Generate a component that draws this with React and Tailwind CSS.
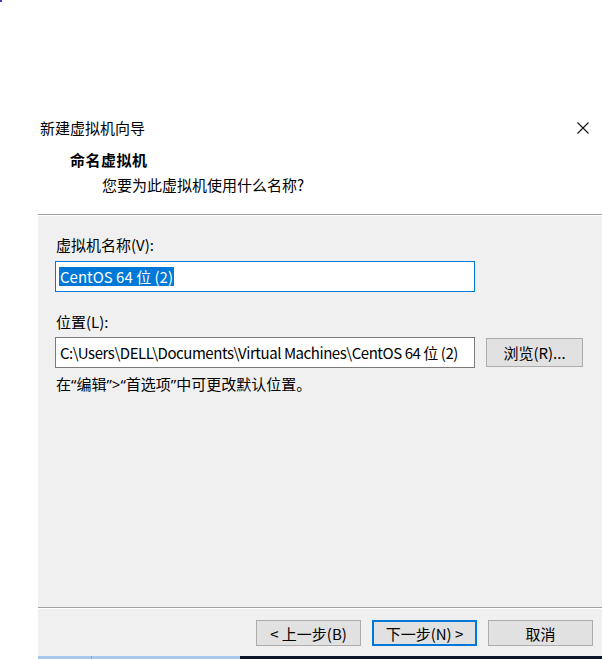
const font = "font-['Noto_Sans_CJK_SC','Noto_Sans',sans-serif]";
const latin = "font-['Noto_Sans',sans-serif]";

const Button = ({ children, primary }) => (
  <button
    className={
      primary
        ? 'w-[105px] h-[26px] bg-[#e1e1e1] border-2 border-[#0078d7] text-[15px] leading-none text-black'
        : 'w-[105px] h-[26px] bg-[#e1e1e1] border border-[#adadad] text-[15px] leading-none text-black'
    }
  >
    {children}
  </button>
);

const App = () => {
  return (
    <div className={`relative w-[602px] h-[659px] bg-white overflow-hidden flex flex-col ${font} text-[15px] leading-[20px] text-black`}>
      <span className="absolute left-0 top-0 w-[2px] h-[2px] bg-[#3b3bd0]"></span>

      <div className="h-[118px] shrink-0"></div>

      <div className="ml-[38px] flex-1 flex flex-col">
        {/* header */}
        <div className="bg-white h-[97px] shrink-0 flex flex-col border-b border-[#a0a0a0]">
          <div className="flex items-center justify-between h-[20px] pl-[2px] pr-[13px]">
            <span>新建虚拟机向导</span>
            <svg width="12" height="12" viewBox="0 0 12 12" className="mt-[-1px]">
              <path d="M0.5 0.5 L11.5 11.5 M11.5 0.5 L0.5 11.5" stroke="#111" strokeWidth="1.1" fill="none" />
            </svg>
          </div>
          <div className="mt-[12px] pl-[32px] font-bold tracking-[0.5px]">命名虚拟机</div>
          <div className="mt-[5px] pl-[64px]">您要为此虚拟机使用什么名称?</div>
        </div>

        {/* body */}
        <div className="bg-[#f0f0f0] flex-1 flex flex-col border-t border-white">
          <div className="h-[392px] shrink-0 pl-[17px] pt-[19px] flex flex-col border-b border-[#a0a0a0]">
            <div className="pl-[1px]">虚拟机名称(V):</div>
            <div className="mt-[6px] w-[420px] h-[31px] bg-white border border-[#0078d7] flex items-center px-[3px]">
              <span className="bg-[#0078d7] text-white leading-[19px] px-[1px]">CentOS 64 位 (2)</span>
            </div>
            <div className="mt-[20px] pl-[1px]">位置(L):</div>
            <div className="mt-[5px] flex items-center gap-[11px]">
              <div className="w-[420px] h-[31px] bg-white border border-[#7a7a7a] flex items-center pl-[4px] whitespace-nowrap overflow-hidden tracking-[-0.45px]">
                C:\Users\DELL\Documents\Virtual Machines\CentOS 64 位 (2)
              </div>
              <button className="w-[97px] h-[29px] bg-[#e1e1e1] border border-[#adadad] text-[15px] leading-none">
                浏览(R)...
              </button>
            </div>
            <div className="mt-[6px] pl-[1px]">
              在<span className={latin}>“</span>编辑<span className={latin}>”&gt;“</span>首选项<span className={latin}>”</span>中可更改默认位置。
            </div>
          </div>

          <div className="flex-1 border-t border-white flex items-start pt-[11px] pl-[218px] gap-[11px]">
            <Button>&lt; 上一步(B)</Button>
            <Button primary>下一步(N) &gt;</Button>
            <Button>取消</Button>
          </div>
        </div>
      </div>

      <div className="h-[3px] shrink-0 flex">
        <div className="w-[38px]"></div>
        <div className="w-[54px] bg-[#a9c9ec] border-r border-[#7fa6d0]"></div>
        <div className="w-[148px] bg-[#a9c9ec]"></div>
        <div className="flex-1 bg-[#0a1628]"></div>
      </div>
    </div>
  );
};

export default App;
